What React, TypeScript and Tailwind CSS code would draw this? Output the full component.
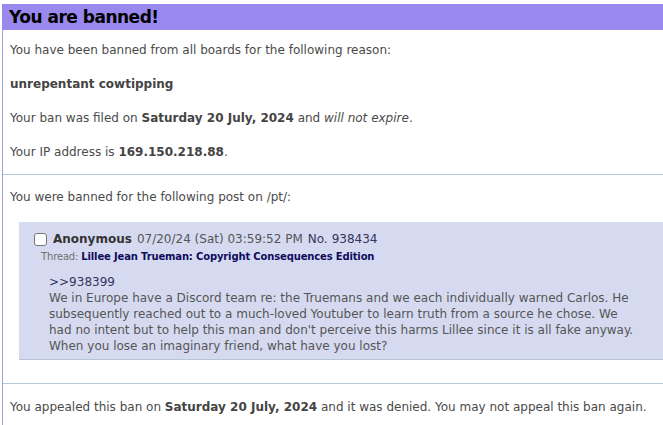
import React from "react";

const font = { fontFamily: "'DejaVu Sans', Verdana, sans-serif" };

export const BanHeader = () => {
  return (
    <div className="ml-[2px] mt-[4px] h-[26px] bg-[#9988ee] pl-[7px] flex items-center">
      <h2 className="text-[17px] font-bold text-black tracking-[-0.5px]">You are banned!</h2>
    </div>
  );
};

export const PostPreview = () => {
  return (
    <div className="ml-[16px] bg-[#d6daf0] border-b border-[#b7c5d9] pt-[9px] pb-[5px]">
      <div className="flex items-center h-[16px] pl-[15px]">
        <span className="w-[13px] h-[13px] rounded-[3px] border border-[#767676] bg-white mr-[6px]" />
        <span className="font-bold text-[#333]">Anonymous</span>
        <span className="ml-[5px] text-[#555]">07/20/24 (Sat) 03:59:52 PM</span>
        <span className="ml-[5px] text-[#34345c]">No.</span>
        <span className="ml-[4px] text-[#34345c]">938434</span>
      </div>
      <div className="pl-[22px] mt-[3px] text-[10px] leading-[14px] tracking-[-0.15px]">
        <span className="text-[#707070]">Thread: </span>
        <span className="font-bold text-[#0f0c5d]">Lillee Jean Trueman: Copyright Consequences Edition</span>
      </div>
      <div className="pl-[30px] mt-[10px] text-[#555] leading-[16px]">
        <div className="text-[#34345c]">&gt;&gt;938399</div>
        <div>
          We in Europe have a Discord team re: the Truemans and we each individually warned Carlos. He
          <br />
          subsequently reached out to a much-loved Youtuber to learn truth from a source he chose. We
          <br />
          had no intent but to help this man and don't perceive this harms Lillee since it is all fake anyway.
          <br />
          When you lose an imaginary friend, what have you lost?
        </div>
      </div>
    </div>
  );
};

export default function App() {
  return (
    <div className="w-[663px] h-[425px] bg-white overflow-hidden text-[12px] leading-[16px] text-[#4a4a4a]" style={font}>
      <BanHeader />
      <div className="ml-[2px] border-l border-[#a9a0d8] h-[395px]">
        <div className="pl-[7px] pt-[12px] pb-[14px] flex flex-col gap-[18px]">
          <p>You have been banned from all boards for the following reason:</p>
          <p className="font-bold text-[#444]">unrepentant cowtipping</p>
          <p>
            Your ban was filed on <b className="text-[#444]">Saturday 20 July, 2024</b> and <i>will not expire</i>.
          </p>
          <p>
            Your IP address is <b className="text-[#444]">169.150.218.88</b>.
          </p>
        </div>
        <hr className="border-[#b7c5d9]" />
        <div className="pt-[14px] pb-[23px]">
          <p className="pl-[7px] mb-[17px]">You were banned for the following post on /pt/:</p>
          <PostPreview />
        </div>
        <hr className="border-[#b7c5d9]" />
        <p className="pl-[7px] pt-[15px]">
          You appealed this ban on <b className="text-[#444]">Saturday 20 July, 2024</b> and it was denied. You may not appeal this ban again.
        </p>
      </div>
    </div>
  );
}
